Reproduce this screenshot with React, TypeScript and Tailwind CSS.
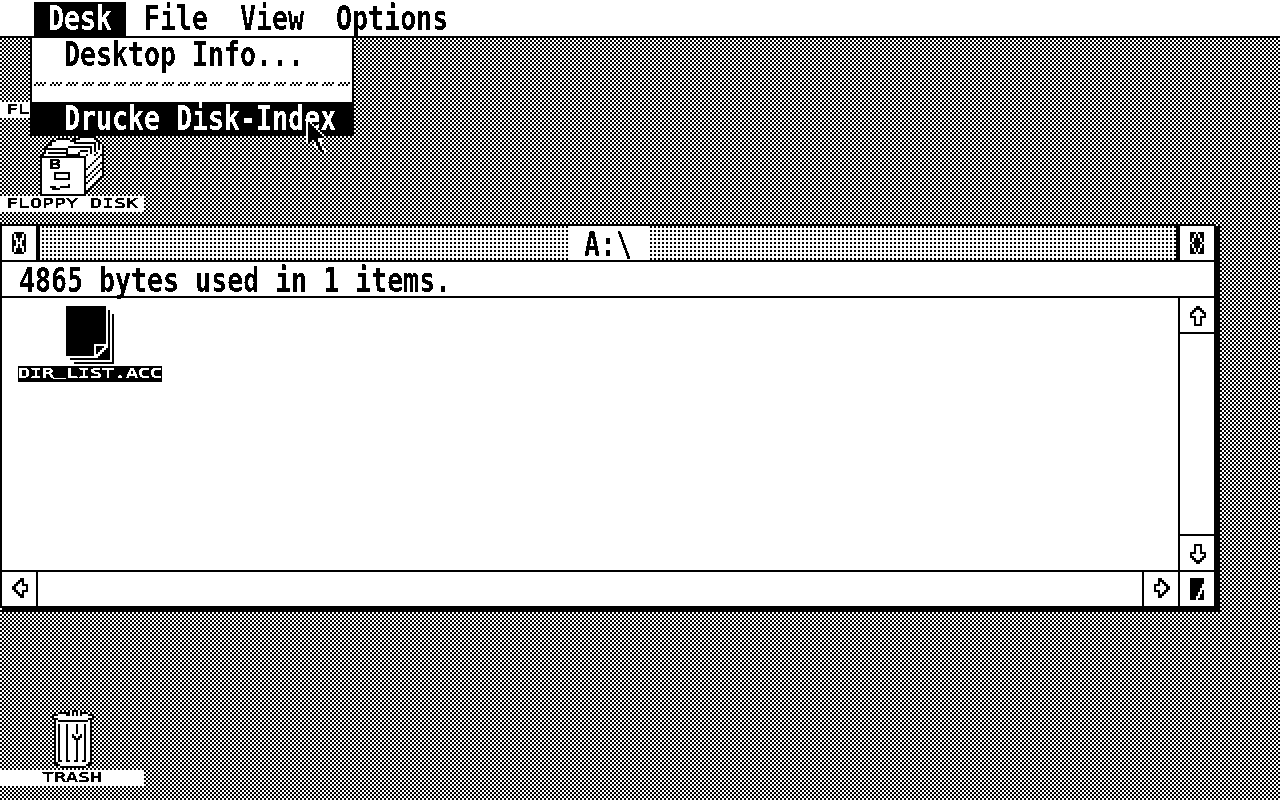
import type { ReactNode } from "react";
import { clsx } from "clsx";

const ARROW_UP = [
  "...XX...",
  "..XXXX..",
  ".XX..XX.",
  "XX....XX",
  "X......X",
  "XXX..XXX",
  "..X..X..",
  "..X..X..",
  "..X..X..",
  "..XXXX..",
];

const ARROW_LEFT = [
  "....XX..",
  "...XXX..",
  "..XX.X..",
  ".XX..XXX",
  "XX.....X",
  "XX.....X",
  ".XX..XXX",
  "..XX.X..",
  "...XXX..",
  "....XX..",
];

const ARROW_DOWN = [...ARROW_UP].reverse();
const ARROW_RIGHT = ARROW_LEFT.map((row) => row.split("").reverse().join(""));

const CLOSER = [
  ".XXXXX.",
  "X.XXX.X",
  "X.XXX.X",
  "X..X..X",
  "XX.X.XX",
  "XX...XX",
  "XX.X.XX",
  "X..X..X",
  "X.XXX.X",
  "X.XXX.X",
  ".XXXXX.",
];

const FULLER = [
  "XXX.XXX",
  "XX.X.XX",
  "XX.X.XX",
  "X.XXX.X",
  "X.XXX.X",
  ".XXXXX.",
  "X.XXX.X",
  "X.XXX.X",
  "XX.X.XX",
  "XX.X.XX",
  "XXX.XXX",
];

const SIZER = [
  "XXXXXXX",
  "XXXXXXX",
  "XXXXXXX",
  "XXXXXX.",
  "XXXXXX.",
  "XXXXX..",
  "XXXXX.X",
  "XXXX..X",
  "XXXX.XX",
  "XXX..XX",
  "XXX.XXX",
];

// X = ink, o = paper, anything else is transparent
const POINTER = [
  "oXo",
  "oXXo",
  "oXXXo",
  "oXXXXo",
  "oXXXXXo",
  "oXXXXXXo",
  "oXXXXXXXo",
  "oXXXXXXXXo",
  "oXXXXXoo",
  "oXXoXXo",
  "oXo.oXXo",
  ".o..oXXo",
  ".....oXXo",
  ".....oXXo",
  "......oXXo",
];

const P14 = "XXXXXXXXXXXXXX";
const P20 = "XXXXXXXXXXXXXXXXXXXX";
const FILE_ICON = [
  P20,
  P20,
  P20 + ".X",
  P20 + ".X",
  ...Array.from({ length: 15 }, () => P20 + ".X.X"),
  P14 + ".......X.X",
  P14 + ".XXXX..X.X",
  P14 + ".XXX..XX.X",
  P14 + ".XX..XXX.X",
  P14 + ".X..XXXX.X",
  P14 + "...XXXXX.X",
  "................XXXXXX.X",
  "..XXXXXXXXXXXXXXXXXXXX.X",
  ".......................X",
  "....XXXXXXXXXXXXXXXXXXXX",
];

const TRASH_RIBS = ".XoXoooXooooXoooXooX.";
const TRASH_ICON = [
  "........X.XXX.X......",
  "...XXXXXXoXoXoXXXX...",
  ".XXooooXXoXoXoXoooXX.",
  "XooooooooooooooooooX.".replace("X.", "oX"),
  "XXXoooooooooooooooXXX",
  ".XoXXXXXXXXXXXXXXXoX.",
  ".XoooooooooooooooooX.",
  ...Array.from({ length: 5 }, () => TRASH_RIBS),
  ".XoXoooXooXoooXoXooX.",
  ".XoXoooXooXXoXXoXooX.",
  ".XoXoooXoooXXXooXooX.",
  ...Array.from({ length: 10 }, () => TRASH_RIBS),
  ".XoXXooXXooXXooXXooX.",
  ".XXoooooooooooooooXX.",
  "..XXoooooooooooooXX..",
  "....XXXXXXXXXXXXX....",
];

const BOX_FRONT: Record<number, string> = {
  10: "XXXXXXXXXXXXXXXXXXXXXXX",
  18: "XooooooXXXXXXXXoooooooX",
  19: "XooooooXooooooXoooooooX",
  20: "XooooooXooooooXoooooooX",
  21: "XooooooXXXXXXXXoooooooX",
  24: "XoooooooooooooXoooooooX",
  25: "XooooXXXooXXXXXoooooooX",
  26: "XoooooXXXXooooooooooooX",
  29: "XXXXXXXXXXXXXXXXXXXXXXX",
};

// Folder edges running back from the front of the box
const boxSide = (y: number) =>
  Array.from({ length: 9 }, (_, i) => {
    const d = i + 23 + y;
    if (d > 50) return ".";
    if (i === 8 || d === 50 || d === 39 || d === 43 || d === 46) return "X";
    return "o";
  }).join("");

const FLOPPY_ICON = [
  "....................XXXXXXX.....",
  "........XXXXXXX..XXXoooooooX....",
  "......XXoooooooXXXooooooooooXX..",
  ".....XoooooooooooXXXXXXXXXXXoXX.",
  "....XXoooooooooooooooooooooXoXoX",
  "...XooooooooooXXXXXXXXXXXXoXoXoX",
  "..XXXXXXXXXXXXoooooooooooXoXoXoX",
  "..XooooooooooXooooooXXXXoXoXoooX",
  "..XoXXXXXXXXXXoooooXoooooXooXooX",
  ".XoooooooooooXXXXXXXoooXoooXooXX",
  ...Array.from({ length: 20 }, (_, i) => {
    const y = i + 10;
    return (BOX_FRONT[y] ?? "XoooooooooooooooooooooX") + boxSide(y);
  }),
];

function Bitmap({ rows, className }: { rows: string[]; className?: string }) {
  const width = Math.max(...rows.map((row) => row.length));
  return (
    <svg
      width={width * 2}
      height={rows.length * 2}
      viewBox={`0 0 ${width} ${rows.length}`}
      shapeRendering="crispEdges"
      className={clsx("block shrink-0", className)}
    >
      {rows.flatMap((row, y) =>
        [...row].map((c, x) =>
          c === "X" || c === "o" ? (
            <rect key={`${x}-${y}`} x={x} y={y} width={1} height={1} fill={c === "X" ? "#000" : "#fff"} />
          ) : null
        )
      )}
    </svg>
  );
}

function SysText({ children }: { children: string }) {
  return (
    <span className="inline-block translate-y-px whitespace-pre font-['DejaVu_Sans_Mono',monospace] text-[26.6px] leading-none font-bold scale-y-[1.24] [filter:url(#crisp)]">
      {children}
    </span>
  );
}

function SmallText({ children }: { children: ReactNode }) {
  return (
    <span className="inline-block whitespace-pre font-['DejaVu_Sans_Mono',monospace] text-[19.93px] leading-none scale-y-[.69] [-webkit-text-stroke:0.4px] [filter:url(#crisp-small)]">
      {children}
    </span>
  );
}

function IconLabel({ children, inverted }: { children: ReactNode; inverted?: boolean }) {
  return (
    <div className={clsx("flex h-4 w-36 items-center justify-center", inverted ? "bg-black text-white" : "bg-white text-black")}>
      <SmallText>{children}</SmallText>
    </div>
  );
}

function Gadget({ rows, className }: { rows: string[]; className?: string }) {
  return (
    <div className={clsx("flex size-[34px] shrink-0 items-center justify-center bg-white", className)}>
      <Bitmap rows={rows} />
    </div>
  );
}

export default function App() {
  return (
    <div className="relative h-[800px] w-[1280px] overflow-hidden bg-[conic-gradient(#000_25%,#fff_0_50%,#000_0_75%,#fff_0)] bg-size-[4px_4px] text-black">
      <svg width="0" height="0" className="absolute">
        <filter id="crisp" x="-5%" y="-20%" width="110%" height="140%">
          <feComponentTransfer>
            <feFuncA type="discrete" tableValues="0 1" />
          </feComponentTransfer>
        </filter>
        <filter id="crisp-small" x="-5%" y="-20%" width="110%" height="140%">
          <feComponentTransfer>
            <feFuncA type="discrete" tableValues="0 1 1" />
          </feComponentTransfer>
        </filter>
      </svg>

      {/* Menu bar */}
      <div className="flex h-[38px] items-start border-b-2 border-black bg-white pl-[34px]">
        <div className="mt-0.5 flex h-[34px] w-[92px] items-center justify-center bg-black pb-0.5 text-white"><SysText>Desk</SysText></div>
        <div className="ml-[18px] flex h-9 items-center gap-8">
          <SysText>File</SysText>
          <SysText>View</SysText>
          <SysText>Options</SysText>
        </div>
      </div>

      {/* Desktop icons */}
      <div className="absolute top-[102px] left-0"><IconLabel>FLOPPY DISK</IconLabel></div>
      <div className="absolute top-[136px] left-0 w-36">
        <Bitmap rows={FLOPPY_ICON} className="ml-10" />
        <div className="absolute top-[17px] left-[49px]"><SmallText>B</SmallText></div>
        <IconLabel>FLOPPY DISK</IconLabel>
      </div>
      <div className="absolute top-[710px] left-0 flex w-36 flex-col">
        <Bitmap rows={TRASH_ICON} className="mb-0.5 ml-[52px]" />
        <IconLabel>TRASH</IconLabel>
      </div>

      {/* Window */}
      <div className="absolute top-[224px] left-0 flex h-[384px] w-[1216px] flex-col border-2 border-black bg-white shadow-[4px_4px_0_#000,2px_4px_0_#000,4px_2px_0_#000]">
        <div className="flex h-9 border-b-2 border-black">
          <Gadget rows={CLOSER} />
          <div className="flex flex-1 justify-center border-x-4 border-black bg-[conic-gradient(#000_25%,#fff_0)] bg-size-[4px_4px]">
            <div className="ml-0.5 flex h-full w-[82px] items-center bg-white pt-0.5 pl-4"><SysText>{"A:\\"}</SysText></div>
          </div>
          <Gadget rows={FULLER} />
        </div>
        <div className="flex h-9 items-center border-b-2 border-black pt-0.5 pl-[17px]"><SysText>4865 bytes used in 1 items.</SysText></div>
        <div className="flex flex-1">
          <div className="flex-1">
            <div className="mt-2 ml-4 flex w-36 flex-col items-center">
              <Bitmap rows={FILE_ICON} />
              <div className="mt-0.5">
                <IconLabel inverted>
                  DIR<span className="relative -top-1">_</span>LIST.ACC
                </IconLabel>
              </div>
            </div>
          </div>
          <div className="flex w-9 flex-col justify-between border-l-2 border-black">
            <Gadget rows={ARROW_UP} className="box-content border-b-2 border-black *:mt-0.5 *:ml-0.5" />
            <Gadget rows={ARROW_DOWN} className="box-content border-t-2 border-black *:mt-0.5 *:ml-0.5" />
          </div>
        </div>
        <div className="flex h-9 justify-between border-t-2 border-black">
          <Gadget rows={ARROW_LEFT} className="box-content border-r-2 border-black *:mb-0.5 *:ml-0.5" />
          <div className="flex">
            <Gadget rows={ARROW_RIGHT} className="box-content border-l-2 border-black *:mb-0.5 *:ml-0.5" />
            <Gadget rows={SIZER} className="box-content border-l-2 border-black" />
          </div>
        </div>
      </div>

      {/* Open menu */}
      <div className="absolute top-[38px] left-[30px] w-[324px] border-x-2 border-b-2 border-black bg-white">
        <div className="flex h-8 items-center pt-px pl-8"><SysText>Desktop Info...</SysText></div>
        <div className="h-8 pt-3 pl-0.5">
          <svg width="318" height="4" shapeRendering="crispEdges" className="block">
            <pattern id="dash" width="16" height="4" patternUnits="userSpaceOnUse">
              <path d="M2 0h2v2h-2zM6 0h2v2h-2zM10 0h2v2h-2zM0 2h2v2h-2zM4 2h2v2h-2zM8 2h2v2h-2z" />
            </pattern>
            <rect width="318" height="4" fill="url(#dash)" />
          </svg>
        </div>
        <div className="flex h-8 items-center bg-black pt-px pl-8 text-white"><SysText>Drucke Disk-Index</SysText></div>
      </div>

      <Bitmap rows={POINTER} className="absolute top-[122px] left-[306px]" />
    </div>
  );
}
